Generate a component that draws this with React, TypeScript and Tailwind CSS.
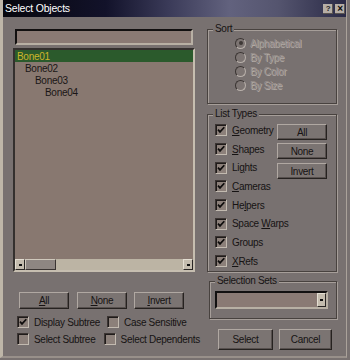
import type { ReactNode } from "react";

const BODY = "bg-[#787170]";

function U({ children }: { children: ReactNode }) {
  return <span className="underline underline-offset-[1px]">{children}</span>;
}

function Btn({ children, className = "" }: { children: ReactNode; className?: string }) {
  return (
    <div
      className={`flex shrink-0 items-center justify-center border border-t-[#b0a8a2] border-l-[#b0a8a2] border-r-[#262220] border-b-[#262220] bg-[#7b7472] text-[#161313] shadow-[inset_-1px_-1px_0_#57504e] ${className}`}
    >
      {children}
    </div>
  );
}

function Check({ checked }: { checked?: boolean }) {
  return (
    <span className="flex h-[12px] w-[12px] shrink-0 items-center justify-center border border-t-[#3c3533] border-l-[#3c3533] border-r-[#c2bab0] border-b-[#c2bab0] bg-[#8c807a] shadow-[inset_1px_1px_0_#1f1b1a]">
      {checked ? (
        <svg viewBox="0 0 10 10" className="h-[10px] w-[10px]">
          <path d="M2 4.6 L4 6.9 L8.3 2.2" fill="none" stroke="#0e0c0c" strokeWidth="1.7" />
        </svg>
      ) : null}
    </span>
  );
}

function CheckRow({ checked, children, className = "" }: { checked?: boolean; children: ReactNode; className?: string }) {
  return (
    <div className={`flex items-center gap-[5px] ${className}`}>
      <Check checked={checked} />
      <span className="whitespace-nowrap text-[#161313]">{children}</span>
    </div>
  );
}

function Radio({ on, label }: { on?: boolean; label: string }) {
  return (
    <div className="flex h-[14px] items-center gap-[4px]">
      <span className="flex h-[11px] w-[11px] items-center justify-center rounded-full border border-t-[#3a3432] border-l-[#3a3432] border-r-[#b8b0aa] border-b-[#b8b0aa] bg-[#7d7573]">
        {on ? <span className="h-[4px] w-[4px] rounded-full bg-[#3e3836]" /> : null}
      </span>
      <span className="text-[#978f8c] [text-shadow:1px_1px_0_#b3aba6]">{label}</span>
    </div>
  );
}

function Group({ label, className = "", children }: { label: string; className?: string; children: ReactNode }) {
  return (
    <fieldset
      className={`m-0 border border-[#48423f] p-0 shadow-[inset_1px_1px_0_#a69e99,1px_1px_0_#a69e99] ${className}`}
    >
      <legend className={`ml-[5px] px-[2px] leading-[12px] text-[#161313] ${BODY}`}>{label}</legend>
      {children}
    </fieldset>
  );
}

function TinyBtn({ className = "", dot = true }: { className?: string; dot?: boolean }) {
  return (
    <span
      className={`flex shrink-0 items-center justify-center border border-t-[#e4ded2] border-l-[#e4ded2] border-r-[#2a2624] border-b-[#2a2624] bg-[#c4bcae] ${className}`}
    >
      {dot ? <span className="h-[2px] w-[3px] bg-[#111]" /> : null}
    </span>
  );
}

const bones = [
  { name: "Bone01", pad: "pl-[2px]", sel: true },
  { name: "Bone02", pad: "pl-[10px]" },
  { name: "Bone03", pad: "pl-[20px]" },
  { name: "Bone04", pad: "pl-[30px]" },
];

export default function App() {
  return (
    <div
      className={`h-[360px] w-[350px] overflow-hidden ${BODY} font-['Liberation_Sans',Arial,sans-serif] text-[10px] tracking-[-0.3px]`}
    >
      <div className="h-[358px] w-[347px] border-l-[3px] border-r border-b-2 border-l-[#beb6a8] border-r-[#aaa29a] border-b-[#98908a]">
        {/* title bar */}
        <div className="flex h-[17px] items-center justify-between bg-[linear-gradient(90deg,#07070d_0%,#12122a_30%,#3a3a58_48%,#62627e_66%,#55556f_80%,#2a2a46_100%)] pl-[2px] pr-[1px]">
          <span className="text-[10.5px] tracking-[-0.2px] text-white">Select Objects</span>
          <div className="flex gap-[2px]">
            <span className="flex h-[10px] w-[10px] items-center justify-center bg-[#b6aea6] text-[8px] font-bold leading-none text-[#1a1a1a] shadow-[inset_-1px_-1px_0_#5a5450]">
              ?
            </span>
            <span className="flex h-[10px] w-[10px] items-center justify-center bg-[#b6aea6] text-[10px] font-bold leading-none text-[#0a0a0a] shadow-[inset_-1px_-1px_0_#5a5450]">
              ×
            </span>
          </div>
        </div>

        <div className="flex">
          {/* left column */}
          <div className="ml-[10px] flex w-[187px] flex-col">
            <div className="ml-[2px] mt-[12px] h-[16px] w-[178px] border-2 border-t-[#121010] border-l-[#121010] border-r-[#b8b0a4] border-b-[#b8b0a4] bg-[#8a7a74]" />
            <div className="mt-[3px] flex h-[224px] w-[182px] flex-col border-2 border-t-[#34302e] border-l-[#34302e] border-r-[#c6beb0] border-b-[#c6beb0] bg-[#887870]">
              <div className="flex-1">
                {bones.map((b) => (
                  <div
                    key={b.name}
                    className={`flex h-[12px] items-center ${b.pad} ${b.sel ? "bg-[#2b5a2c] text-[#cbb62a]" : "text-[#1a1616]"}`}
                  >
                    {b.name}
                  </div>
                ))}
              </div>
              <div className="flex h-[11px] bg-[#bcb4a4]">
                <TinyBtn className="h-[11px] w-[10px]" />
                <span className="h-[11px] w-[31px] border border-t-[#cfc8bc] border-l-[#cfc8bc] border-r-[#3a3432] border-b-[#3a3432] bg-[#8e8682]" />
                <span className="flex-1" />
                <TinyBtn className="h-[11px] w-[10px]" />
              </div>
            </div>

            <div className="mt-[20px] flex pl-[6px]">
              <Btn className="h-[17px] w-[50px]">
                <U>A</U>ll
              </Btn>
              <Btn className="ml-[8px] h-[17px] w-[50px]">
                <U>N</U>one
              </Btn>
              <Btn className="ml-[7px] h-[17px] w-[50px]">
                <U>I</U>nvert
              </Btn>
            </div>

            <div className="mt-[7px] flex h-[12px] pl-[4px]">
              <CheckRow checked className="w-[90px]">
                Display Subtree
              </CheckRow>
              <CheckRow>Case Sensitive</CheckRow>
            </div>
            <div className="mt-[5px] flex h-[12px] pl-[4px]">
              <CheckRow className="w-[90px]">Select Subtree</CheckRow>
              <CheckRow>Select Dependents</CheckRow>
            </div>
          </div>

          {/* right column */}
          <div className="ml-[7px] flex w-[130px] flex-col">
            <Group label="Sort" className="mt-[6px] h-[81px]">
              <div className="pl-[27px] pt-[1px]">
                <Radio on label="Alphabetical" />
                <Radio label="By Type" />
                <Radio label="By Color" />
                <Radio label="By Size" />
              </div>
            </Group>

            <Group label="List Types" className="mt-[4px] h-[164px]">
              <div className="flex pl-[7px] pt-[1px]">
                <div className="flex w-[62px] flex-col">
                  {[
                    <><U>G</U>eometry</>,
                    <><U>S</U>hapes</>,
                    <>Li<U>g</U>hts</>,
                    <><U>C</U>ameras</>,
                    <>He<U>l</U>pers</>,
                    <>Space <U>W</U>arps</>,
                    <>Groups</>,
                    <><U>X</U>Refs</>,
                  ].map((l, i) => (
                    <CheckRow key={i} checked className="h-[18.7px]">
                      {l}
                    </CheckRow>
                  ))}
                </div>
                <div className="mt-[3px] flex flex-col gap-[3px]">
                  <Btn className="h-[16px] w-[50px]">All</Btn>
                  <Btn className="h-[16px] w-[50px]">None</Btn>
                  <Btn className="mt-[1px] h-[16px] w-[50px]">Invert</Btn>
                </div>
              </div>
            </Group>

            <Group label="Selection Sets" className="ml-[2px] mt-[3px] h-[44px] w-[128px]">
              <div className="ml-[5px] mt-[4px] flex h-[18px] w-[113px] border-2 border-t-[#121010] border-l-[#121010] border-r-[#b8b0a4] border-b-[#b8b0a4] bg-[#8a7a74]">
                <span className="flex-1" />
                <TinyBtn className="h-[14px] w-[9px]" />
              </div>
            </Group>

            <div className="ml-[11px] mt-[10px] flex">
              <Btn className="h-[21px] w-[55px]">Select</Btn>
              <Btn className="ml-[6px] h-[21px] w-[53px]">Cancel</Btn>
            </div>
          </div>
        </div>
      </div>
    </div>
  );
}
